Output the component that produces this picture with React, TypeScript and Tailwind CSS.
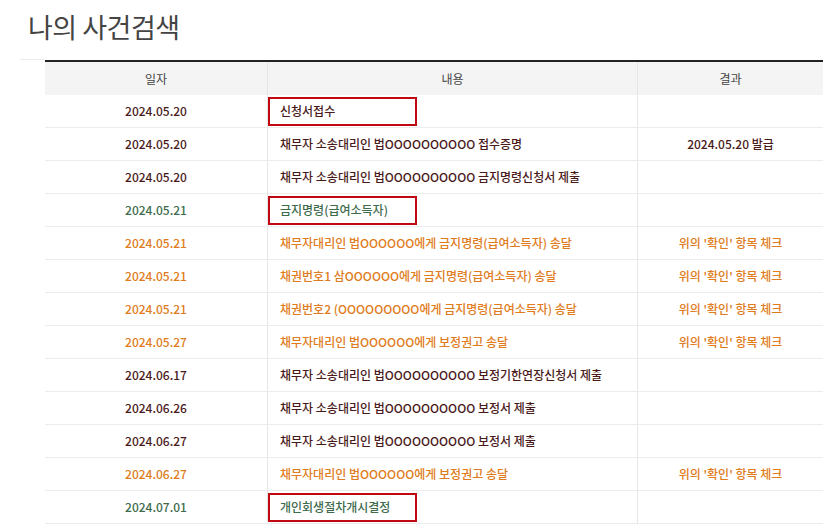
import React from "react";

type Tone = "dark" | "green" | "orange";

type Row = {
  date: string;
  content: string;
  result?: string;
  tone: Tone;
  boxed?: boolean;
};

const rows: Row[] = [
  { date: "2024.05.20", content: "신청서접수", tone: "dark", boxed: true },
  { date: "2024.05.20", content: "채무자 소송대리인 법OOOOOOOOOO 접수증명", result: "2024.05.20 발급", tone: "dark" },
  { date: "2024.05.20", content: "채무자 소송대리인 법OOOOOOOOOO 금지명령신청서 제출", tone: "dark" },
  { date: "2024.05.21", content: "금지명령(급여소득자)", tone: "green", boxed: true },
  { date: "2024.05.21", content: "채무자대리인 법OOOOOO에게 금지명령(급여소득자) 송달", result: "위의 '확인' 항목 체크", tone: "orange" },
  { date: "2024.05.21", content: "채권번호1 삼OOOOOO에게 금지명령(급여소득자) 송달", result: "위의 '확인' 항목 체크", tone: "orange" },
  { date: "2024.05.21", content: "채권번호2 (OOOOOOOOO에게 금지명령(급여소득자) 송달", result: "위의 '확인' 항목 체크", tone: "orange" },
  { date: "2024.05.27", content: "채무자대리인 법OOOOOO에게 보정권고 송달", result: "위의 '확인' 항목 체크", tone: "orange" },
  { date: "2024.06.17", content: "채무자 소송대리인 법OOOOOOOOOO 보정기한연장신청서 제출", tone: "dark" },
  { date: "2024.06.26", content: "채무자 소송대리인 법OOOOOOOOOO 보정서 제출", tone: "dark" },
  { date: "2024.06.27", content: "채무자 소송대리인 법OOOOOOOOOO 보정서 제출", tone: "dark" },
  { date: "2024.06.27", content: "채무자대리인 법OOOOOO에게 보정권고 송달", result: "위의 '확인' 항목 체크", tone: "orange" },
  { date: "2024.07.01", content: "개인회생절차개시결정", tone: "green", boxed: true },
];

const toneClass: Record<Tone, string> = {
  dark: "text-[#4a1a1a]",
  green: "text-[#3d6b4c]",
  orange: "text-[#e07b20]",
};

const App = () => {
  return (
    <div className="w-[835px] h-[528px] overflow-hidden bg-white font-['Noto_Sans_CJK_KR','Noto_Sans',sans-serif]">
      <h1 className="pl-[28px] pt-[6px] h-[58px] text-[27px] leading-[42px] text-[#444] font-normal tracking-[-0.5px]">
        나의 사건검색
      </h1>

      <div className="flex">
        <div className="w-[25px] ml-[20px] mt-[1px] h-px bg-[#ececec]" />
        <div className="w-[778px] border-t-2 border-[#222] mt-[2px]">
          <div className="flex h-[33px] bg-[#f4f4f4] text-[12px] text-[#444] items-stretch">
            <div className="w-[223px] flex items-center justify-center border-r border-[#e6e6e6]">일자</div>
            <div className="w-[370px] flex items-center justify-center border-r border-[#e6e6e6]">내용</div>
            <div className="flex-1 flex items-center justify-center">결과</div>
          </div>

          {rows.map((r, i) => (
            <div
              key={i}
              className={`flex h-[33px] border-b border-[#ececec] text-[12px] font-medium ${toneClass[r.tone]}`}
            >
              <div className="w-[223px] flex items-center justify-center border-r border-[#e6e6e6]">
                {r.date}
              </div>
              <div className="w-[370px] flex items-center border-r border-[#e6e6e6]">
                {r.boxed ? (
                  <div className="w-[149px] h-[29px] border-2 border-[#c00812] flex items-center pl-[10px]">
                    {r.content}
                  </div>
                ) : (
                  <span className="pl-[12px]">{r.content}</span>
                )}
              </div>
              <div className="flex-1 flex items-center justify-center">{r.result}</div>
            </div>
          ))}
        </div>
      </div>
    </div>
  );
};

export default App;
